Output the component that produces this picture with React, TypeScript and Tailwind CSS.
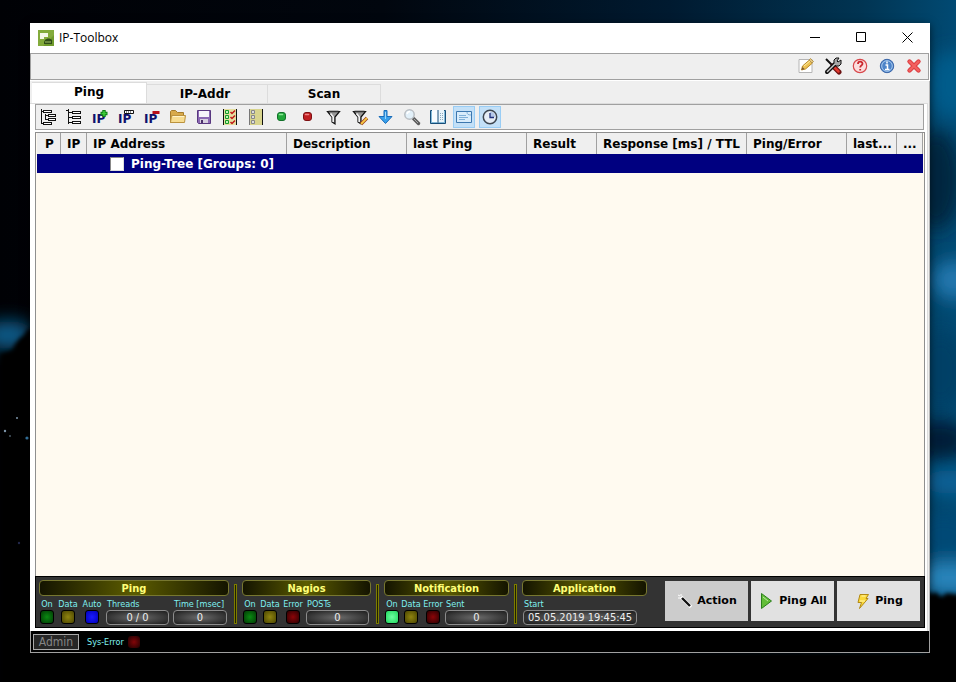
import React from 'react'

const iconClass = 'h-[18px] w-[18px] shrink-0'

function Icon({ children, className = iconClass }: { children: React.ReactNode; className?: string }) {
  return (
    <svg viewBox="0 0 18 18" className={className} aria-hidden="true">
      {children}
    </svg>
  )
}

function Wallpaper() {
  return (
    <svg className="absolute inset-0 h-full w-full" viewBox="0 0 956 682" preserveAspectRatio="none" aria-hidden="true">
      <defs>
        <linearGradient id="sky" x1="0" x2="1">
          <stop offset="0" stopColor="#000105" />
          <stop offset="0.4" stopColor="#01060e" />
          <stop offset="0.7" stopColor="#001a30" />
          <stop offset="0.9" stopColor="#013452" />
          <stop offset="1" stopColor="#014a73" />
        </linearGradient>
        <filter id="soft" x="-50%" y="-50%" width="200%" height="200%">
          <feGaussianBlur stdDeviation="9" />
        </filter>
        <filter id="edge">
          <feGaussianBlur stdDeviation="2" />
        </filter>
      </defs>
      <rect width="956" height="682" fill="url(#sky)" />
      <g filter="url(#soft)">
        <ellipse cx="952" cy="85" rx="24" ry="34" fill="#045c8b" />
        <ellipse cx="936" cy="180" rx="26" ry="50" fill="#01253f" />
        <ellipse cx="954" cy="280" rx="22" ry="20" fill="#2077ae" />
        <ellipse cx="940" cy="370" rx="28" ry="40" fill="#023f66" />
        <ellipse cx="940" cy="440" rx="30" ry="20" fill="#011f38" />
        <ellipse cx="950" cy="482" rx="26" ry="12" fill="#0a639a" />
        <ellipse cx="944" cy="535" rx="32" ry="24" fill="#044a76" />
        <ellipse cx="950" cy="578" rx="34" ry="16" fill="#2a86bd" />
        <ellipse cx="8" cy="335" rx="26" ry="14" fill="#0a5f8e" />
      </g>
      <path
        d="M0 354 L12 350 15 344 20 338 24 335 27 330 40 324 V682 H0 Z M926 590 l6 4 4 -2 5 5 6 -4 20 3 V700 H0 V652 H926 Z"
        fill="#010205"
        filter="url(#edge)"
      />
      <g fill="#7c94a8">
        <circle cx="5" cy="431" r="1.2" />
        <circle cx="17" cy="418" r="1" />
        <circle cx="10" cy="436" r="0.8" />
        <circle cx="27" cy="438" r="1.6" fill="#3a7fae" />
        <circle cx="19" cy="543" r="1.2" fill="#23284a" />
      </g>
    </svg>
  )
}

function LogoIcon() {
  return (
    <svg viewBox="0 0 16 16" className="h-4 w-4 shrink-0" aria-hidden="true">
      <rect width="16" height="16" fill="#6f9a2c" />
      <path d="M0 0h16v5L5 16H0z" fill="#83ab3c" />
      <path d="M2 3h8v4H6v2H2z" fill="#f4f8e8" />
      <path d="M7 10c2-2 5-2 7 0v4H6v-2z" fill="#2f4d17" />
      <path d="M7 12h6" stroke="#a8c56e" />
    </svg>
  )
}

function NoteIcon() {
  return (
    <Icon>
      <path d="M2 2.500h13v13H2z" fill="#fff" stroke="#b5b5b5" />
      <path d="M4.500 13l1-4 7-6 3 3-7 6z" fill="#eec252" stroke="#b98a2b" />
      <path d="M7 9l6-5" stroke="#fff0a5" />
      <path d="M12 3l1.500-1.500 3 3L15 6z" fill="#e5c77e" stroke="#b39554" />
      <path d="M4.500 13l1-3 2 2z" fill="#775636" />
    </Icon>
  )
}

function ToolsIcon() {
  return (
    <Icon>
      <path d="M2 2l7 7" stroke="#111" strokeWidth="2" />
      <path d="M9 9l6 6" stroke="#6b1010" strokeWidth="5" strokeLinecap="round" />
      <path d="M9.500 9.500l5 5" stroke="#e03b30" strokeWidth="2.500" strokeLinecap="round" />
      <path d="M3 15l8-8" stroke="#111" strokeWidth="4" strokeLinecap="round" />
      <path d="M10 7V3l2-2h3l-2 3 1 1 3-2v4l-2 2h-3z" fill="#a8a8a8" stroke="#111" />
      <path d="M3 15l8-8" stroke="#ccc" strokeWidth="1.500" />
    </Icon>
  )
}

function HelpIcon() {
  return (
    <Icon>
      <circle cx="9" cy="9" r="6.700" fill="#fbdede" stroke="#d8474b" strokeWidth="1.200" />
      <path d="M7 7c0-3 4.500-3 4.500-.3 0 1.700-2.300 1.700-2.300 3.800M9.200 12v1.500" fill="none" stroke="#c9262c" strokeWidth="1.800" />
    </Icon>
  )
}

function InfoIcon() {
  return (
    <Icon>
      <circle cx="9" cy="9" r="6.700" fill="#4d84c9" stroke="#3b66a8" />
      <circle cx="9" cy="9" r="5.300" fill="none" stroke="#a9caee" />
      <path d="M7.500 8h2v4M7 12.500h4.500M9 4.500v2" fill="none" stroke="#fff" strokeWidth="1.500" />
    </Icon>
  )
}

function QuitIcon() {
  return (
    <Icon>
      <path d="M4.500 4.500l9 9M13.500 4.500l-9 9" stroke="#dc3f42" strokeWidth="4.400" strokeLinecap="round" />
      <path d="M4.500 4.500l9 9M13.500 4.500l-9 9" stroke="#f4605f" strokeWidth="2.400" strokeLinecap="round" />
    </Icon>
  )
}

function ExpandTreeIcon() {
  return (
    <Icon>
      <g fill="#fff" stroke="#111" shapeRendering="crispEdges">
        <path d="M2.500 1v15M2.500 3.500h3M2.500 15.500h3M6.500 5.500v6M6.500 7.500h3M6.500 11.500h3" fill="none" />
        <path d="M4.500 2.500h8v2h-8zM9.500 6.500h7v2h-7zM9.500 10.500h7v2h-7zM4.500 14.500h8v2h-8z" />
      </g>
    </Icon>
  )
}

function CollapseTreeIcon() {
  return (
    <Icon>
      <g fill="#fff" stroke="#111" shapeRendering="crispEdges">
        <path d="M3.500 1v15M1 2.500h3M3.500 4.500h4M3.500 9.500h4M3.500 14.500h4" fill="none" />
        <path d="M7.500 3.500h8v2h-8zM7.500 8.500h8v2h-8zM7.500 13.500h8v2h-8z" />
      </g>
    </Icon>
  )
}

// The three IP buttons share the same letters and differ in the corner badge
function IpIcon({ children }: { children: React.ReactNode }) {
  return (
    <Icon>
      <text x="1" y="15" fontFamily="DejaVu Sans, sans-serif" fontSize="12" fontWeight="bold" fill="#10106c">
        IP
      </text>
      {children}
    </Icon>
  )
}

function FolderIcon() {
  return (
    <Icon>
      <path d="M1.500 14.500v-11l1-1h4l2 2h6v10z" fill="#d8aa4b" stroke="#a67c2b" />
      <path d="M1.500 14.500l1-7h14l-1 7z" fill="#f7dc90" stroke="#bb923e" />
      <path d="M4 8.500h11" stroke="#fff3c9" />
    </Icon>
  )
}

function SaveIcon() {
  return (
    <Icon>
      <path d="M2.500 2.500h13v13h-12l-1-1z" fill="#8b68b3" stroke="#58377f" />
      <path d="M4 3h10v6H4z" fill="#f6f3fa" />
      <path d="M5 11h8v4H5z" fill="#d6cedf" />
      <path d="M6 12h2v3H6z" fill="#4a3169" />
    </Icon>
  )
}

function CheckAllIcon() {
  return (
    <Icon>
      <path d="M2 1h14v16H2z" fill="#e6dfa0" />
      <path d="M2.500 1v16M15.500 1v16" stroke="#111" />
      <path d="M4.500 2.500h3v3h-3zM4.500 7.500h3v3h-3zM4.500 12.500h3v3h-3z" fill="#c2f3bb" stroke="#149b26" />
      <path d="M9.500 4l1.500 1.500 3-3M9.500 9l1.500 1.500 3-3M9.500 14l1.500 1.500 3-3" fill="none" stroke="#c01919" strokeWidth="1.500" />
    </Icon>
  )
}

function UncheckAllIcon() {
  return (
    <Icon>
      <path d="M3 1h12v16H3z" fill="#d9d58e" />
      <path d="M2.500 1v16" stroke="#777" />
      <path d="M15.500 1v16" stroke="#111" />
      <path d="M4.500 2.500h3v3h-3zM4.500 7.500h3v3h-3zM4.500 12.500h3v3h-3z" fill="#ddd" stroke="#888" />
    </Icon>
  )
}

function DotIcon({ fill, shine, edge }: { fill: string; shine: string; edge: string }) {
  return (
    <Icon>
      <rect x="4.500" y="4.500" width="8" height="8" rx="2.500" fill={fill} stroke={edge} />
      <path d="M6.500 6.500h3" stroke={shine} strokeWidth="1.600" strokeLinecap="round" />
    </Icon>
  )
}

function FilterIcon({ edit = false }: { edit?: boolean }) {
  return (
    <Icon>
      <path d="M2.500 3.500h12l-4.500 5.500v7l-3-2V9z" fill="#999" stroke="#111" strokeWidth="1.200" />
      <path d="M3.500 3.500h10" stroke="#333" strokeWidth="1.600" />
      <path d="M5.500 5.500L8.200 9v5" fill="none" stroke="#f2f2f2" strokeWidth="1.600" />
      {edit && <path d="M10 16l6-6" stroke="#9c3a1c" strokeWidth="3.400" />}
      {edit && <path d="M10 16l6-6" stroke="#f6c945" strokeWidth="1.800" />}
    </Icon>
  )
}

function DownIcon() {
  return (
    <Icon>
      <path d="M7 2.500h3v6h5L8.500 15.500 2 8.500h5z" fill="#39a0ea" stroke="#1a6cb9" strokeLinejoin="round" />
      <path d="M8.500 4v7" stroke="#9dd6fb" />
    </Icon>
  )
}

function SearchIcon() {
  return (
    <Icon>
      <path d="M10.500 10.500l5 5" stroke="#5c5c5c" strokeWidth="3.400" strokeLinecap="round" />
      <path d="M11 11l4 4" stroke="#aaa" strokeWidth="1" />
      <circle cx="6.500" cy="6.500" r="4.700" fill="#e2f0f9" stroke="#b9bec3" strokeWidth="1.500" />
      <path d="M4 6c.5-2 2-2.500 3-2.500" fill="none" stroke="#fff" strokeWidth="1.400" />
    </Icon>
  )
}

function BookIcon() {
  return (
    <Icon>
      <path d="M1.500 2.500h15v13h-15z" fill="#82bada" stroke="#164d78" />
      <path d="M3 2h6v13l-1-1H3z" fill="#f8fcff" />
      <path d="M9 2h6v12h-5l-1 1z" fill="#e9f4fb" />
      <path d="M9 2v14" stroke="#164d78" />
      <path d="M11 5.500h3M11 7.500h3M11 9.500h3M11 11.500h3" stroke="#89a9be" strokeDasharray="1 1" />
    </Icon>
  )
}

function CardIcon() {
  return (
    <Icon>
      <path d="M1.500 3.500h15v11h-15z" fill="#d8ecfb" stroke="#3c77ae" />
      <path d="M4 7.500h7M4 9.500h9M4 11.500h6" stroke="#7fb0d8" />
      <path d="M12 4c0 2 1 3 4 3" fill="none" stroke="#7fb0d8" />
    </Icon>
  )
}

function ClockIcon() {
  return (
    <Icon>
      <circle cx="9" cy="9" r="6.700" fill="#e6edf5" stroke="#3d4650" strokeWidth="1.500" />
      <path d="M9 3.500V9h5A5 5.500 0 0 0 9 3.500z" fill="#b3c7e8" />
      <path d="M9 5v4.500h4" fill="none" stroke="#20307a" strokeWidth="1.300" />
    </Icon>
  )
}

const menuActions = [
  { name: 'Notes', icon: <NoteIcon /> },
  { name: 'Settings', icon: <ToolsIcon /> },
  { name: 'Help', icon: <HelpIcon /> },
  { name: 'About', icon: <InfoIcon /> },
  { name: 'Quit', icon: <QuitIcon /> },
]

const tools = [
  { name: 'Expand tree', icon: <ExpandTreeIcon /> },
  { name: 'Collapse tree', icon: <CollapseTreeIcon /> },
  {
    name: 'Add IP',
    icon: (
      <IpIcon>
        <path d="M13 2v7M9.500 5.500h7" stroke="#0a7d14" strokeWidth="3.400" />
        <path d="M13 3v5M10.500 5.500h5" stroke="#3ecb3a" strokeWidth="1.600" />
      </IpIcon>
    ),
  },
  {
    name: 'Edit IP',
    icon: (
      <IpIcon>
        <path d="M7.500 2.500h9v3h-9z" fill="#fff" stroke="#111" />
        <path d="M9 4h6" stroke="#111" strokeDasharray="1 1" />
      </IpIcon>
    ),
  },
  {
    name: 'Remove IP',
    icon: (
      <IpIcon>
        <path d="M9.500 4.500h7" stroke="#b80f19" strokeWidth="3" />
      </IpIcon>
    ),
  },
  { name: 'Open', icon: <FolderIcon /> },
  { name: 'Save', icon: <SaveIcon /> },
  { name: 'Check all', icon: <CheckAllIcon /> },
  { name: 'Uncheck all', icon: <UncheckAllIcon /> },
  { name: 'Start', icon: <DotIcon fill="#22a83a" shine="#8be596" edge="#12702a" /> },
  { name: 'Stop', icon: <DotIcon fill="#c01f22" shine="#ee8585" edge="#7d1013" /> },
  { name: 'Filter', icon: <FilterIcon /> },
  { name: 'Edit filter', icon: <FilterIcon edit /> },
  { name: 'Move down', icon: <DownIcon /> },
  { name: 'Search', icon: <SearchIcon /> },
  { name: 'Log book', icon: <BookIcon /> },
  { name: 'Details', icon: <CardIcon />, active: true },
  { name: 'Timer', icon: <ClockIcon />, active: true },
]

const columns = [
  { title: 'P', width: 'w-[24px]' },
  { title: 'IP', width: 'w-[26px]' },
  { title: 'IP Address', width: 'w-[200px]' },
  { title: 'Description', width: 'w-[120px]' },
  { title: 'last Ping', width: 'w-[120px]' },
  { title: 'Result', width: 'w-[70px]' },
  { title: 'Response [ms] / TTL', width: 'w-[150px]' },
  { title: 'Ping/Error', width: 'w-[100px]' },
  { title: 'last...', width: 'w-[50px]' },
  { title: '...', width: '' },
]

const ledColors = {
  green: 'bg-[radial-gradient(circle,#0a8a12,#023a05)]',
  lit: 'bg-[radial-gradient(circle,#6dffa0,#1fd45c)]',
  yellow: 'bg-[radial-gradient(circle,#8f8410,#4a4400)]',
  red: 'bg-[radial-gradient(circle,#8c0508,#2c0002)]',
  blue: 'bg-[radial-gradient(circle,#1a1aff,#0000b8)]',
}

type LedColor = keyof typeof ledColors

function Led({ label, color, width }: { label: string; color: LedColor; width: string }) {
  return (
    <div className={`flex flex-col items-center ${width}`}>
      <span className="whitespace-nowrap leading-3">{label}</span>
      <span role="img" aria-label={`${label} ${color}`} className={`h-[14px] w-[14px] rounded-[3px] border border-black ${ledColors[color]}`} />
    </div>
  )
}

function Field({ label, value, width }: { label: string; value: string; width: string }) {
  return (
    <label className={`flex flex-col ${width}`}>
      <span className="whitespace-nowrap pl-px leading-3">{label}</span>
      <input
        readOnly
        value={value}
        className="h-[15px] w-full rounded border border-[#8c8c8c] bg-[radial-gradient(ellipse,#6a6a6a,#1c1c1c)] text-center text-[11px] leading-3 text-[#eee] outline-none"
      />
    </label>
  )
}

function Group({ title, width, children }: { title: string; width: string; children: React.ReactNode }) {
  return (
    <section className={`flex flex-col gap-0.5 ${width}`}>
      <h2 className="flex h-4 items-center justify-center rounded border border-[#77772f] bg-[linear-gradient(90deg,#141400,#5c5c00_50%,#141400)] text-[11px] leading-none font-bold text-[#ffff78]">
        {title}
      </h2>
      <div className="flex pl-px">{children}</div>
    </section>
  )
}

function Separator() {
  return <div className="mt-1 h-10 w-[3px] shrink-0 border border-[#7d7d00] bg-[#222200]" />
}

function BigButton({ label, icon, active = false }: { label: string; icon: React.ReactNode; active?: boolean }) {
  return (
    <button
      className={`flex h-10 w-[83px] items-center justify-center gap-[3px] whitespace-nowrap text-[11px] font-bold ${active ? 'bg-[#cccccc]' : 'bg-[#e1e1e1]'}`}
    >
      {icon}
      {label}
    </button>
  )
}

function App() {
  return (
    <main className="relative flex min-h-screen flex-col bg-black pt-[23px] pr-[26px] pb-[29px] pl-[30px] font-['DejaVu_Sans',sans-serif] text-[12px] leading-4 text-black">
      <Wallpaper />
      <div className="relative flex flex-1 flex-col bg-white shadow-[0_2px_8px_rgba(0,0,0,0.6)]">
        <header className="flex h-[30px] shrink-0 items-center pb-px">
          <div className="flex flex-1 items-center gap-[5px] pl-2">
            <LogoIcon />
            <h1 className="font-['Open_Sans',sans-serif] text-[12px] leading-4">IP-Toolbox</h1>
          </div>
          <button aria-label="Minimize" className="flex h-full w-[46px] items-center justify-center">
            <svg viewBox="0 0 11 11" className="h-[11px] w-[11px]"><path d="M0 5.500h10" stroke="#000" /></svg>
          </button>
          <button aria-label="Maximize" className="flex h-full w-[46px] items-center justify-center">
            <svg viewBox="0 0 11 11" className="h-[11px] w-[11px]"><path d="M.5.5h9v9h-9z" fill="none" stroke="#000" /></svg>
          </button>
          <button aria-label="Close" className="flex h-full w-[46px] items-center justify-center">
            <svg viewBox="0 0 11 11" className="h-[11px] w-[11px]"><path d="M.5.5l10 10M10.500.5l-10 10" stroke="#000" /></svg>
          </button>
        </header>

        <div className="mr-px flex h-[27px] shrink-0 items-center justify-end gap-[9px] border border-[#a0a0a0] bg-[#efefef] pr-[5px] pb-px">
          {menuActions.map((action) => (
            <button key={action.name} aria-label={action.name}>{action.icon}</button>
          ))}
        </div>

        <div className="mt-px flex flex-1 flex-col border-r border-[#b8b8b8] bg-[#efefef]">
          <div role="tablist" className="flex h-[22px] shrink-0 items-end pl-0.5 font-bold">
            <button role="tab" aria-selected="true" className="h-[21px] w-[115px] border-t border-r border-[#dcdcdc] bg-white pb-0.5">Ping</button>
            <button role="tab" aria-selected="false" className="h-[19px] w-[121px] border-t border-r border-[#dcdcdc] pr-1">IP-Addr</button>
            <button role="tab" aria-selected="false" className="h-[19px] w-[113px] border-t border-r border-[#dcdcdc]">Scan</button>
          </div>

          <div role="tabpanel" className="mr-px flex flex-1 flex-col border-t border-r border-[#dcdcdc] bg-white pr-0.5 pb-[3px] pl-[5px]">
            <div role="toolbar" className="mr-px flex h-[26px] shrink-0 items-center gap-1 border border-[#a0a0a0] bg-[#efefef] px-px">
              {tools.map((tool) => (
                <button
                  key={tool.name}
                  aria-label={tool.name}
                  className={`flex h-[22px] w-[22px] items-center justify-center ${tool.active ? 'border border-[#99cdf5] bg-[#c3e0f7]' : ''}`}
                >
                  {tool.icon}
                </button>
              ))}
            </div>

            <div className="mt-0.5 flex-1 border border-b-0 border-[#8f8f8f] bg-[#fffaf0] px-px">
              <table className="w-full table-fixed border-separate border-spacing-0">
                <thead>
                  <tr className="h-[21px] bg-[#efefef]">
                    {columns.map((column) => (
                      <th
                        key={column.title}
                        className={`overflow-hidden border-r border-[#a0a0a0] p-0 text-left whitespace-nowrap ${column.title === 'P' ? 'pl-2' : 'pl-1.5'} ${column.width}`}
                      >
                        {column.title}
                      </th>
                    ))}
                  </tr>
                </thead>
                <tbody>
                  <tr className="h-[19px] bg-[#000080] text-white">
                    <td colSpan={10} className="p-0 pl-[73px] font-bold">
                      <label className="flex items-center gap-[7px]">
                        <input type="checkbox" className="h-[14px] w-[14px] appearance-none border border-t-[#888] border-r-[#ddd] border-b-[#ddd] border-l-[#888] bg-white" />
                        Ping-Tree [Groups: 0]
                      </label>
                    </td>
                  </tr>
                </tbody>
              </table>
            </div>

            <div className="flex h-[52px] shrink-0 items-start border border-black bg-[#333] pt-[3px] pr-1 pl-[3px] font-['DejaVu_Sans_Condensed','DejaVu_Sans',sans-serif] text-[9px] text-[#7ff0f0]">
              <div className="flex gap-[5px]">
                <Group title="Ping" width="w-[190px]">
                  <div className="flex gap-1">
                    <Led label="On" color="green" width="w-[14px]" />
                    <Led label="Data" color="yellow" width="w-[20px]" />
                    <Led label="Auto" color="blue" width="w-[20px]" />
                    <Field label="Threads" value="0 / 0" width="w-[63px]" />
                    <Field label="Time [msec]" value="0" width="w-[54px]" />
                  </div>
                </Group>
                <Separator />
                <Group title="Nagios" width="w-[129px]">
                  <div className="flex gap-[3px]">
                    <Led label="On" color="green" width="w-[14px]" />
                    <Led label="Data" color="yellow" width="w-[20px]" />
                    <Led label="Error" color="red" width="w-[20px]" />
                    <Field label="POSTs" value="0" width="w-[63px]" />
                  </div>
                </Group>
                <Separator />
                <Group title="Notification" width="w-[125px]">
                  <div className="flex gap-[2px]">
                    <Led label="On" color="lit" width="w-[14px]" />
                    <Led label="Data" color="yellow" width="w-[20px]" />
                    <Led label="Error" color="red" width="w-[20px]" />
                    <Field label="Sent" value="0" width="w-[63px]" />
                  </div>
                </Group>
                <Separator />
                <Group title="Application" width="w-[125px]">
                  <Field label="Start" value="05.05.2019 19:45:45" width="w-[114px]" />
                </Group>
              </div>
              <div className="ml-auto flex gap-[3px] pt-px font-['DejaVu_Sans',sans-serif] text-black">
                <BigButton
                  label="Action"
                  active
                  icon={
                    <Icon>
                      <path d="M5 5l10 10" stroke="#fff" strokeWidth="3.600" />
                      <path d="M6 6l8 8" stroke="#111" strokeWidth="2.400" />
                      <path d="M2 6h3M5 2v2M2 3l2 1" stroke="#fff" />
                    </Icon>
                  }
                />
                <BigButton
                  label="Ping All"
                  icon={
                    <Icon>
                      <path d="M3.500 1.500l10 7.500-10 7.500z" fill="#62bd38" stroke="#2c801c" />
                      <path d="M5 5l5 4" stroke="#bce9a2" />
                    </Icon>
                  }
                />
                <BigButton
                  label="Ping"
                  icon={
                    <Icon>
                      <path d="M6 2.500h8.500L12 6.500h2L5.500 16.500 7.500 10.500H4z" fill="#fbd83a" stroke="#b38a14" strokeLinejoin="round" />
                      <path d="M7.500 4h4M6 9h5" stroke="#fff6ae" />
                    </Icon>
                  }
                />
              </div>
            </div>
          </div>
        </div>

        <footer className="flex h-[22px] shrink-0 items-center gap-2 border border-t-0 border-[#a0a0a0] bg-black pl-0.5 font-['DejaVu_Sans_Condensed','DejaVu_Sans',sans-serif] text-[9px] text-[#7ff0f0]">
          <span className="flex h-4 w-[46px] items-center justify-center border border-[#aaa] bg-[#262626] text-[12px] leading-none text-[#858585]">Admin</span>
          <div className="flex items-center gap-1">
            Sys-Error
            <span role="img" aria-label="Sys-Error off" className="h-[12px] w-[12px] rounded-[3px] bg-[radial-gradient(circle,#820508,#1c0001)]" />
          </div>
        </footer>
      </div>
    </main>
  )
}

export default App
